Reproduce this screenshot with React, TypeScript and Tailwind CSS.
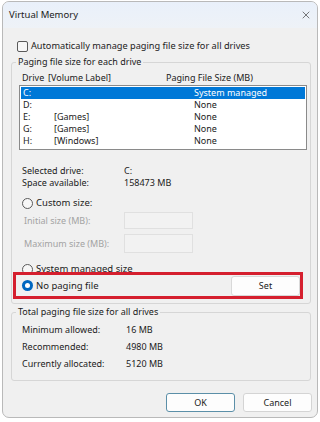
import { X } from 'lucide-react';

const drives = [
  { letter: 'C:', label: '', size: 'System managed' },
  { letter: 'D:', label: '', size: 'None' },
  { letter: 'E:', label: '[Games]', size: 'None' },
  { letter: 'G:', label: '[Games]', size: 'None' },
  { letter: 'H:', label: '[Windows]', size: 'None' },
];

function Radio({ checked }: { checked?: boolean }) {
  return checked ? (
    <span className="w-[11px] h-[11px] rounded-full bg-[#0067c0] flex items-center justify-center shrink-0">
      <span className="w-[5px] h-[5px] rounded-full bg-white" />
    </span>
  ) : (
    <span className="w-[11px] h-[11px] rounded-full border border-[#5a5a5a] bg-[#f7f7f7] shrink-0" />
  );
}

export default function App() {
  return (
    <div
      className="w-[320px] h-[422px] bg-white pt-[1px] text-[9px] leading-[12px] text-[#1b1b1b]"
      style={{ fontFamily: '"Noto Sans", "Open Sans", sans-serif' }}
    >
      <div className="ml-[2px] w-[316px] h-[417px] border border-[#b9b9b9] rounded-[7px] bg-[#f0f0f0] overflow-hidden flex flex-col">
        {/* Title bar */}
        <div className="h-[26px] shrink-0 flex items-center justify-between pl-[6px] pr-[5px] bg-gradient-to-b from-[#e9f0fa] to-[#eef2f7]">
          <span className="text-[9.5px]">Virtual Memory</span>
          <X className="w-[12px] h-[12px] text-[#333]" strokeWidth={1.3} />
        </div>

        {/* Auto manage */}
        <div className="mt-[12px] h-[12px] flex items-center pl-[14px] gap-[3px]">
          <span className="w-[11px] h-[11px] rounded-[2px] border border-[#5a5a5a] bg-[#f7f7f7]" />
          <span className="text-[9.2px]">Automatically manage paging file size for all drives</span>
        </div>

        {/* Group 1 */}
        <div className="mt-[10px] ml-[8px] mr-[6px] border border-[#d6d6d6] rounded-[3px] pb-[4px] pr-[1px]">
          <div className="-mt-[7px] ml-[4px] px-[2px] w-fit bg-[#f0f0f0]">Paging file size for each drive</div>

          <div className="mt-[4px] h-[12px] flex items-center pl-[10px]">
            <span className="w-[26px]">Drive</span>
            <span className="w-[118px]">[Volume Label]</span>
            <span>Paging File Size (MB)</span>
          </div>

          <div className="mt-[1px] ml-[7px] mr-[2px] border border-[#8a8a8a] bg-white pt-[1px] px-[1px] pb-[2px]">
            {drives.map((d, i) => (
              <div
                key={d.letter}
                className={`h-[12px] flex items-center pl-[2px] ${i === 0 ? 'bg-[#0078d7] text-white' : ''}`}
              >
                <span className="w-[31px]">{d.letter}</span>
                <span className="w-[140px]">{d.label}</span>
                <span>{d.size}</span>
              </div>
            ))}
          </div>

          <div className="mt-[15px] pl-[10px]">
            <div className="h-[12px] flex items-center">
              <span className="w-[102px]">Selected drive:</span>
              <span>C:</span>
            </div>
            <div className="h-[12px] flex items-center">
              <span className="w-[102px]">Space available:</span>
              <span>158473 MB</span>
            </div>
          </div>

          <div className="mt-[8px] h-[12px] flex items-center pl-[10px] gap-[3px]">
            <Radio />
            <span className="text-[9.5px]">Custom size:</span>
          </div>

          <div className="mt-[3px] h-[17px] flex items-center pl-[12px] text-[#a3a3a3]">
            <span className="w-[100px]">Initial size (MB):</span>
            <span className="w-[69px] h-[17px] border border-[#e0e0e0] bg-[#f2f2f2]" />
          </div>
          <div className="mt-[5px] h-[19px] flex items-center pl-[12px] text-[#a3a3a3]">
            <span className="w-[100px]">Maximum size (MB):</span>
            <span className="w-[69px] h-[19px] border border-[#e0e0e0] bg-[#f2f2f2]" />
          </div>

          <div className="mt-[10px] h-[12px] flex items-center pl-[10px] gap-[3px]">
            <Radio />
            <span className="text-[9.5px]">System managed size</span>
          </div>

          {/* highlighted option */}
          <div className="relative -mt-[3px] ml-[1px] w-[290px] h-[27px] border-[3px] border-[#d51f2e] bg-[#f0f0f0] flex items-center justify-between pl-[6px]">
            <div className="flex items-center gap-[3px]">
              <Radio checked />
              <span className="text-[9.5px]">No paging file</span>
            </div>
            <button className="w-[69px] h-[20px] bg-[#fdfdfd] border border-[#d9d9d9] rounded-[3px] text-[9px]">
              Set
            </button>
          </div>
        </div>

        {/* Group 2 */}
        <div className="mt-[8px] ml-[8px] mr-[6px] border border-[#d6d6d6] rounded-[3px] pb-[8px]">
          <div className="-mt-[7px] ml-[4px] px-[2px] w-fit bg-[#f0f0f0]">Total paging file size for all drives</div>
          <div className="mt-[3px] pl-[10px]">
            {[
              ['Minimum allowed:', '16 MB'],
              ['Recommended:', '4980 MB'],
              ['Currently allocated:', '5120 MB'],
            ].map(([k, v]) => (
              <div key={k} className="h-[17px] flex items-center">
                <span className="w-[104px]">{k}</span>
                <span>{v}</span>
              </div>
            ))}
          </div>
        </div>

        {/* Buttons */}
        <div className="mt-[12px] mr-[5px] flex justify-end gap-[8px]">
          <button className="w-[69px] h-[19px] bg-[#fdfdfd] border border-[#5b8fa8] rounded-[3px] text-[9px]">
            OK
          </button>
          <button className="w-[69px] h-[19px] bg-[#fdfdfd] border border-[#d4d4d4] rounded-[3px] text-[9px]">
            Cancel
          </button>
        </div>
      </div>
    </div>
  );
}
